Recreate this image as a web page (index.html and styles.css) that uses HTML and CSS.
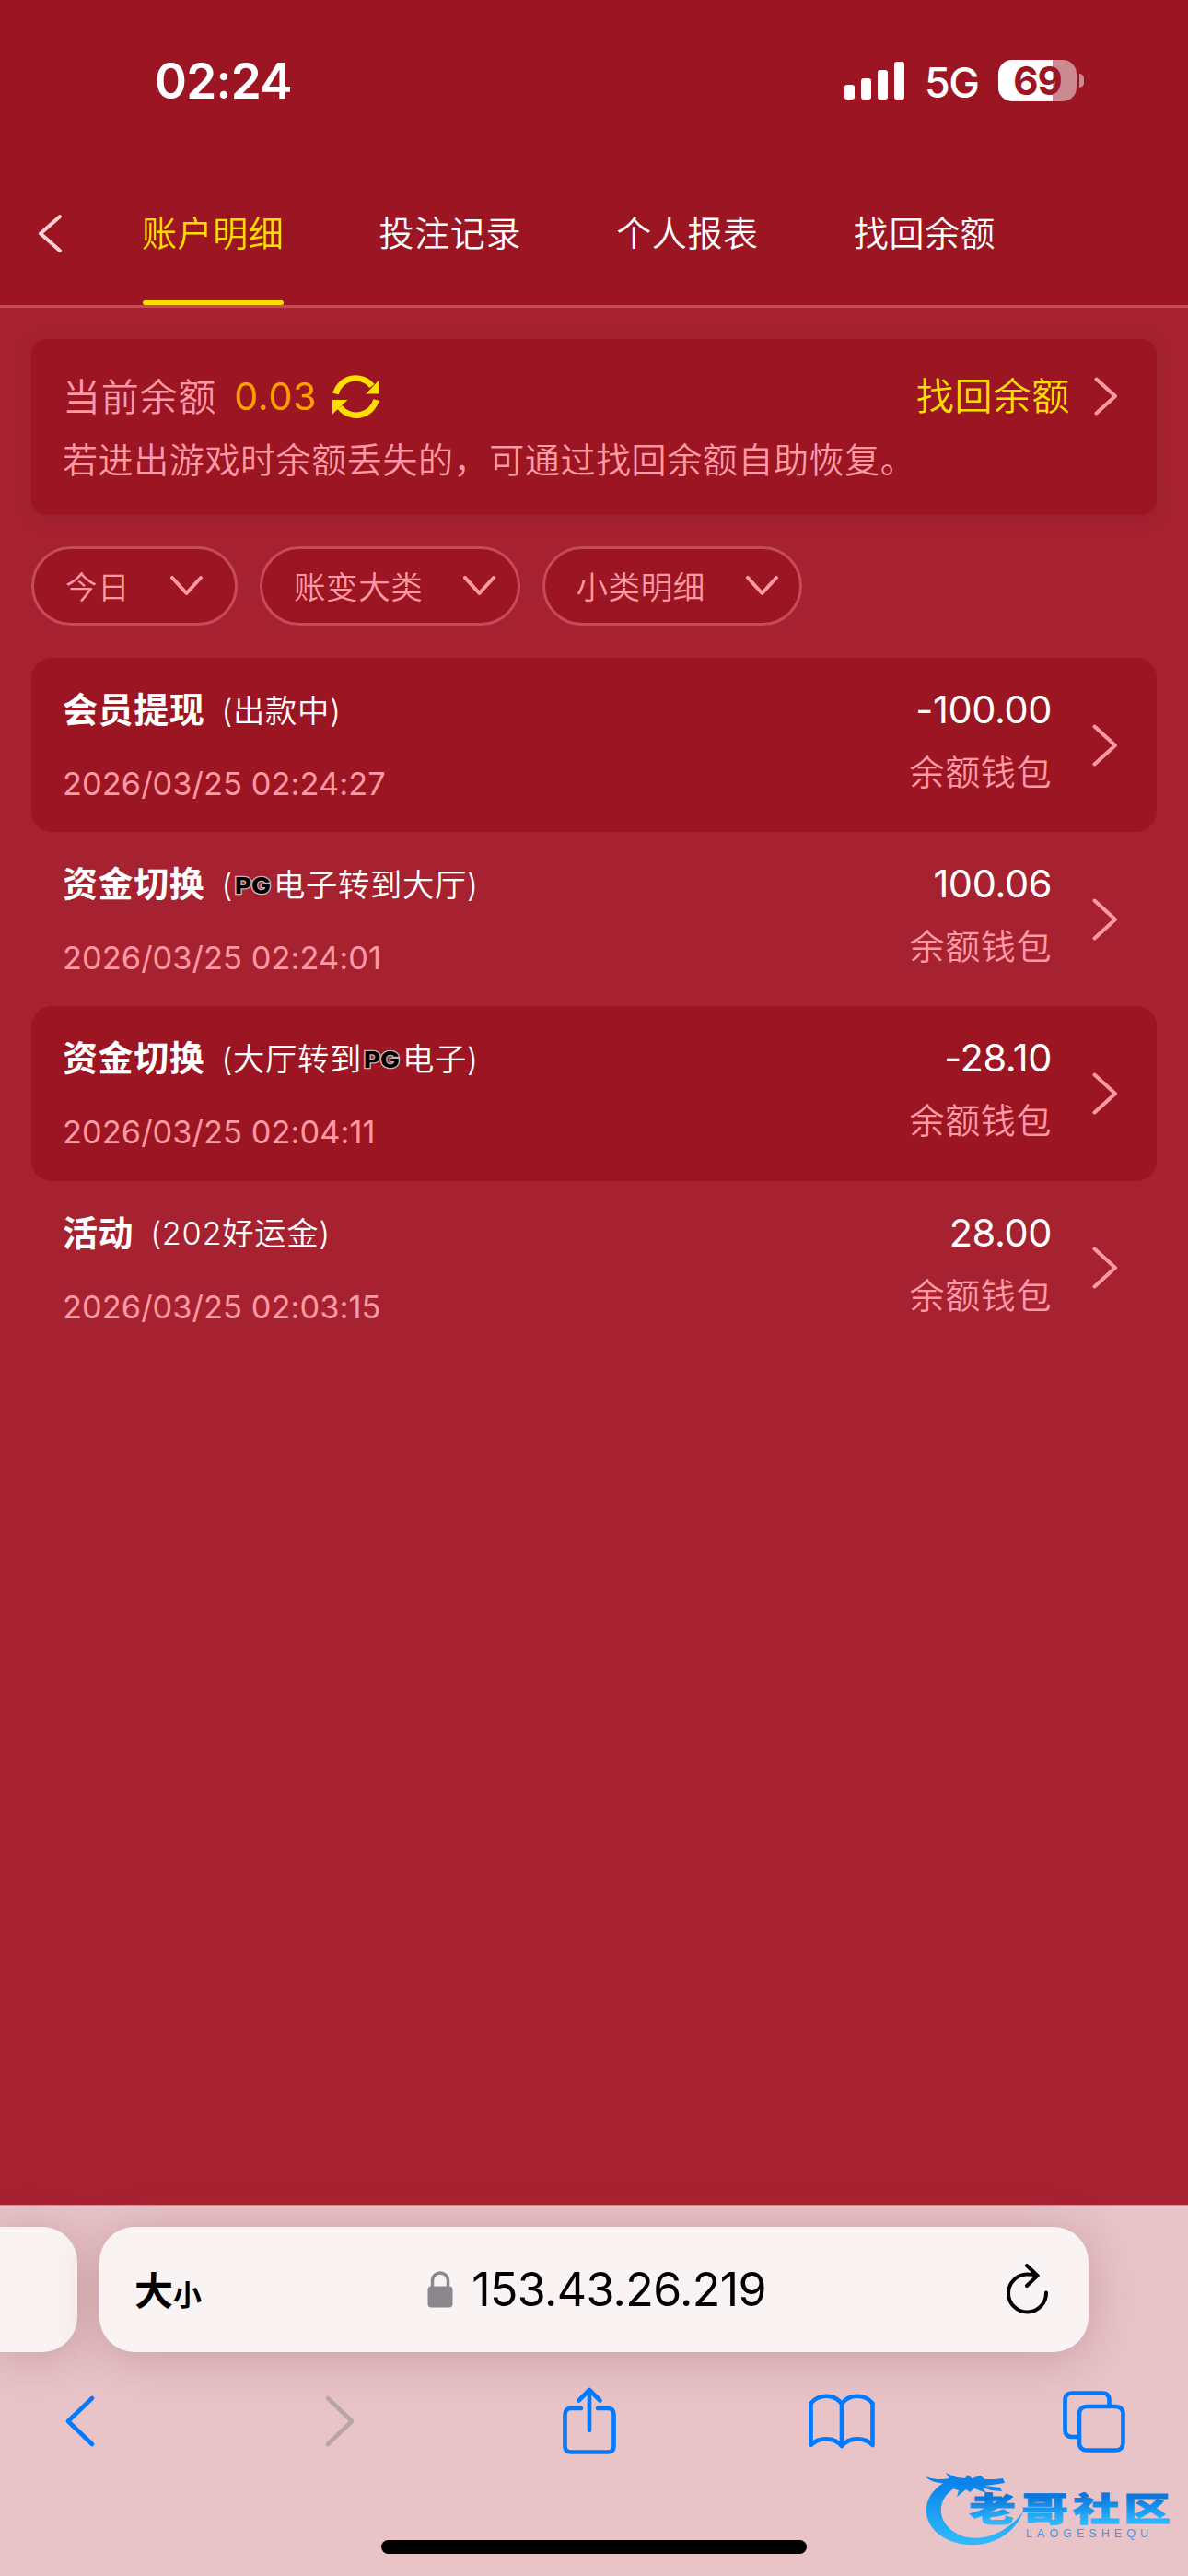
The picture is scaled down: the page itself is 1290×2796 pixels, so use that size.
FILE: index.html
```html
<!DOCTYPE html>
<html lang="zh-CN">
<head>
    <meta charset="UTF-8">
    <meta name="viewport" content="width=device-width, initial-scale=1.0">
    <title>账户明细</title>
    <link rel="stylesheet" href="styles.css">
</head>
<body>
<div class="page">

    <!-- Header -->
    <div class="header">
        <div class="status-bar">
            <div class="time">02:24</div>
            <div class="status-icons">
                <svg class="signal" width="66" height="42" viewBox="0 0 66 42" fill="#fff">
                    <rect x="0" y="25" width="11" height="16" rx="3"/>
                    <rect x="18" y="18" width="11" height="23" rx="3"/>
                    <rect x="36" y="9" width="11" height="32" rx="3"/>
                    <rect x="54" y="0" width="11" height="41" rx="3"/>
                </svg>
                <span class="network">5G</span>
                <div class="battery"><span>69</span></div>
                <div class="battery-cap"></div>
            </div>
        </div>
        <div class="nav">
            <svg class="back" width="27" height="43" viewBox="0 0 27 43" fill="none" stroke="#ffcfd3" stroke-width="4" stroke-linecap="round" stroke-linejoin="round">
                <path d="M24 3L3 21.500L24 40"/>
            </svg>
            <div class="tab active">账户明细</div>
            <div class="tab">投注记录</div>
            <div class="tab">个人报表</div>
            <div class="tab">找回余额</div>
        </div>
    </div>

    <!-- Balance -->
    <div class="balance-card">
        <div class="balance-row">
            <span class="label">当前余额</span>
            <span class="amount">0.03</span>
            <svg class="refresh" width="51" height="51" viewBox="0 0 51 51">
                <path d="M3.500 22.500A22.500 22.500 0 0 1 43 14" fill="none" stroke="#ffdf00" stroke-width="6.500"/>
                <path d="M47.500 29A22.500 22.500 0 0 1 8 37" fill="none" stroke="#ffdf00" stroke-width="6.500"/>
                <path d="M51 7V22.500H36.500Z" fill="#ffdf00"/>
                <path d="M0 44.500V29H16.500Z" fill="#ffdf00"/>
            </svg>
            <span class="recover">找回余额</span>
            <svg class="arrow" width="26" height="42" viewBox="0 0 26 42"><path d="M2.500 2.500L23 21L2.500 39.500"/></svg>
        </div>
        <div class="tip">若进出游戏时余额丢失的，可通过找回余额自助恢复。</div>
    </div>

    <!-- Filters -->
    <div class="filters">
        <div class="filter"><span>今日</span><svg width="35" height="22" viewBox="0 0 35 22"><path d="M2 2L17.500 19L33 2"/></svg></div>
        <div class="filter"><span>账变大类</span><svg width="35" height="22" viewBox="0 0 35 22"><path d="M2 2L17.500 19L33 2"/></svg></div>
        <div class="filter"><span>小类明细</span><svg width="35" height="22" viewBox="0 0 35 22"><path d="M2 2L17.500 19L33 2"/></svg></div>
    </div>

    <!-- Records -->
    <div class="list">
        <div class="record">
            <div class="info">
                <div class="title"><b>会员提现</b><span>(出款中)</span></div>
                <div class="date">2026/03/25 02:24:27</div>
            </div>
            <div class="money">
                <div class="sum">-100.00</div>
                <div class="wallet">余额钱包</div>
            </div>
            <svg class="arrow" width="28" height="46" viewBox="0 0 28 46"><path d="M2.500 2.500L25 23L2.500 43.500"/></svg>
        </div>
        <div class="record">
            <div class="info">
                <div class="title"><b>资金切换</b><span>(<svg class="pg" width="46" height="30" viewBox="0 0 46 30"><text x="3" y="24" textLength="39" lengthAdjust="spacingAndGlyphs">PG</text></svg>电子转到大厅)</span></div>
                <div class="date">2026/03/25 02:24:01</div>
            </div>
            <div class="money">
                <div class="sum">100.06</div>
                <div class="wallet">余额钱包</div>
            </div>
            <svg class="arrow" width="28" height="46" viewBox="0 0 28 46"><path d="M2.500 2.500L25 23L2.500 43.500"/></svg>
        </div>
        <div class="record">
            <div class="info">
                <div class="title"><b>资金切换</b><span>(大厅转到<svg class="pg" width="46" height="30" viewBox="0 0 46 30"><text x="3" y="24" textLength="39" lengthAdjust="spacingAndGlyphs">PG</text></svg>电子)</span></div>
                <div class="date">2026/03/25 02:04:11</div>
            </div>
            <div class="money">
                <div class="sum">-28.10</div>
                <div class="wallet">余额钱包</div>
            </div>
            <svg class="arrow" width="28" height="46" viewBox="0 0 28 46"><path d="M2.500 2.500L25 23L2.500 43.500"/></svg>
        </div>
        <div class="record">
            <div class="info">
                <div class="title"><b>活动</b><span>(202好运金)</span></div>
                <div class="date">2026/03/25 02:03:15</div>
            </div>
            <div class="money">
                <div class="sum">28.00</div>
                <div class="wallet">余额钱包</div>
            </div>
            <svg class="arrow" width="28" height="46" viewBox="0 0 28 46"><path d="M2.500 2.500L25 23L2.500 43.500"/></svg>
        </div>
    </div>

    <!-- Browser bar -->
    <div class="browser">
        <div class="address-row">
            <div class="prev-tab"></div>
            <div class="address">
                <div class="text-size">大<small>小</small></div>
                <div class="url">
                    <svg width="28" height="40" viewBox="0 0 28 40">
                        <path d="M5.500 18V11C5.500 -1 22.500 -1 22.500 11V18" fill="none" stroke="#8a888c" stroke-width="3.500"/>
                        <rect x="0.500" y="16.500" width="27" height="23" rx="4" fill="#8a888c"/>
                    </svg>
                    <span>153.43.26.219</span>
                </div>
                <svg class="reload" width="46" height="56" viewBox="0 0 46 56" fill="none" stroke="#000" stroke-width="4" stroke-linecap="round" stroke-linejoin="round">
                    <path d="M43 31.500A20.500 20.500 0 1 1 22.500 11.500C27 11.500 30 12 33.500 13"/>
                    <path d="M22 2L33.500 13L22 24"/>
                </svg>
            </div>
        </div>
        <div class="toolbar">
            <svg class="go-back" width="32" height="56" viewBox="0 0 32 56"><path d="M29 3L3 28L29 53"/></svg>
            <svg class="go-forward" width="32" height="56" viewBox="0 0 32 56"><path d="M3 3L29 28L3 53"/></svg>
            <svg width="58" height="74" viewBox="0 0 58 74">
                <path d="M20 23H9Q2.500 23 2.500 30V64Q2.500 70.500 9 70.500H49Q55.500 70.500 55.500 64V30Q55.500 23 49 23H38"/>
                <path d="M29 47V3M17.500 14.500L29 3L40.500 14.500"/>
            </svg>
            <svg width="72" height="60" viewBox="0 0 72 60">
                <path d="M36 11C28 0 11 0 2.500 10.500V56C11 47 28 47 36 57C44 47 61 47 69.500 56V10.500C61 0 44 0 36 11V57"/>
            </svg>
            <svg width="68" height="67" viewBox="0 0 68 67">
                <path d="M16 50H10Q2.500 50 2.500 42.500V10Q2.500 2.500 10 2.500H43Q50.500 2.500 50.500 10V15"/>
                <rect x="18" y="17" width="47.500" height="47.500" rx="7.500"/>
            </svg>
        </div>
        <div class="home-indicator"></div>

        <svg class="watermark" width="275" height="88" viewBox="0 0 275 88">
            <defs>
                <linearGradient id="blue" x1="0" y1="0" x2="0" y2="88" gradientUnits="userSpaceOnUse">
                    <stop offset="0.200" stop-color="#0a84ea"/>
                    <stop offset="0.900" stop-color="#2fb8fb"/>
                </linearGradient>
                <linearGradient id="word" x1="0" y1="-33" x2="0" y2="3" gradientUnits="userSpaceOnUse">
                    <stop offset="0.150" stop-color="#0878dc"/>
                    <stop offset="0.900" stop-color="#2cb6fb"/>
                </linearGradient>
            </defs>
            <g fill="url(#blue)">
                <path d="M33 13C-1 24 -5 61 25 77C56 93 97 82 110 48C92 73 60 84 38 72C13 58 16 30 42 19Z"/>
                <path d="M4 10C11 13 20 14 30 12L26 6L38 11L47 12L50 8L54 12L64 9L68 13L79 13L88 12L90 17L77 19L68 20L85 22L87 26L75 25L66 22L70 28L57 23L52 27L48 24L38 32L40 25L29 22L36 17C25 18 11 18 4 10Z"/>
            </g>
            <g class="wordmark">
                <text transform="translate(51 59) scale(1.340 0.960)">老</text>
                <text transform="translate(108 59) scale(1.340 0.960)">哥</text>
                <text transform="translate(164 59) scale(1.340 0.960)">社</text>
                <text transform="translate(219 59) scale(1.340 0.960)">区</text>
            </g>
            <text class="latin" x="113" y="76" textLength="133">LAOGESHEQU</text>
        </svg>
    </div>

</div>
</body>
</html>
```
FILE: styles.css
```css
* {
    box-sizing: border-box;
}

body {
    margin: 0;
    background-color: #a72230;
    font-family: Inter, "Noto Sans CJK SC", sans-serif;
    font-weight: 350;
    color: #fff;
}

svg {
    display: block;
    flex: none;
}

.page {
    display: flex;
    flex-direction: column;
    width: 1290px;
    height: 2796px;
    overflow: hidden;
}

/* Header */
.header {
    background-color: #9b1522;
    border-bottom: 3px solid #c64b58;
}

.status-bar {
    display: flex;
    align-items: center;
    justify-content: space-between;
    height: 175px;
    padding: 0 113px 0 168px;
}

.time {
    font-size: 53px;
    font-weight: 600;
    letter-spacing: -0.700px;
}

.status-icons {
    display: flex;
    align-items: center;
    height: 45px;
}

.network {
    width: 58px;
    margin: 3px 22px 0 21px;
    font-size: 45px;
    font-weight: 500;
    letter-spacing: -1.500px;
}

.battery {
    width: 85px;
    height: 45px;
    border-radius: 15px;
    background: linear-gradient(to right, #fff 59px, #cd8990 59px);
    color: #9b1522;
    font-size: 42px;
    font-weight: 700;
    letter-spacing: -1px;
    line-height: 45px;
    text-align: center;
}

.battery-cap {
    width: 5px;
    height: 15px;
    margin-left: 3px;
    border-radius: 0 5px 5px 0;
    background-color: #cd8990;
}

.nav {
    display: flex;
    align-items: center;
    height: 156px;
    padding-left: 41px;
}

.back {
    margin-right: 86px;
}

.tab {
    position: relative;
    width: 153px;
    margin-right: 104.600px;
    font-size: 38px;
    letter-spacing: 0.600px;
    line-height: 156px;
    white-space: nowrap;
}

.tab.active {
    color: #ffdf00;
}

.tab.active::after {
    content: "";
    position: absolute;
    left: 1px;
    bottom: 0;
    width: 153px;
    height: 5px;
    border-radius: 3px;
    background-color: #ffdf00;
}

/* Balance card */
.balance-card {
    margin: 34px 34px 0;
    height: 191px;
    padding: 32px 42px 0 34px;
    border-radius: 17px;
    background-color: #9b1522;
    box-shadow: 0 4px 18px rgba(120, 30, 40, 0.300);
    color: #ff9aa5;
}

.balance-row {
    display: flex;
    align-items: center;
    height: 60px;
    font-size: 41px;
    letter-spacing: 0.800px;
}

.label {
    margin-top: -4px;
}

.amount {
    margin: 0 17px 0 19px;
    color: #ff9f00;
    font-weight: 400;
    letter-spacing: 0.800px;
}

.recover {
    margin: -6px 26px 0 auto;
    color: #ffdf00;
}

.arrow path,
.filter path {
    fill: none;
    stroke: #ff9aa5;
    stroke-width: 4;
    stroke-linecap: round;
    stroke-linejoin: round;
}

.tip {
    margin-top: 9px;
    font-size: 38px;
    letter-spacing: 0.600px;
    line-height: 60px;
}

/* Filters */
.filters {
    display: flex;
    gap: 24px;
    margin: 34px 34px 0;
}

.filter {
    display: flex;
    align-items: center;
    width: 224px;
    height: 86px;
    padding-left: 34px;
    border: 3px solid #c64b58;
    border-radius: 43px;
    background-color: #9b1522;
    color: #ff9aa5;
    font-size: 34.500px;
    letter-spacing: 0.600px;
}

.filter + .filter {
    width: 282.500px;
}

.filter span {
    margin: -3px 44px 0 0;
}

/* Records */
.list {
    margin: 35px 34px 0;
}

.record {
    display: flex;
    align-items: center;
    height: 189.200px;
    padding: 0 42px 0 34px;
    border-radius: 22px;
}

.record:nth-child(odd) {
    background-color: #9b1522;
}

.info,
.money {
    height: 100%;
    padding-top: 31px;
    line-height: 50px;
}

.info {
    flex: 1;
}

.title {
    display: flex;
    align-items: center;
    height: 50px;
}

.title b {
    margin-right: 18px;
    font-size: 38px;
    font-weight: 700;
    letter-spacing: 0.600px;
}

.title span {
    display: flex;
    align-items: center;
    margin-top: 3px;
    font-size: 34.300px;
    letter-spacing: 0.700px;
}

.pg {
    margin: 1px -1px 0 -1px;
}

.pg text {
    font-family: Inter, sans-serif;
    font-size: 24px;
    font-weight: 800;
    letter-spacing: 0;
    fill: #000;
    stroke: #c9b4b8;
    stroke-width: 2.500px;
    paint-order: stroke;
}

.date {
    margin-top: 31px;
    color: #ff9aa5;
    font-size: 34.300px;
    font-weight: 400;
    letter-spacing: 0.100px;
}

.money {
    margin-right: 44px;
    text-align: right;
}

.sum {
    font-size: 41.500px;
    font-weight: 400;
    letter-spacing: -0.400px;
}

.wallet {
    margin-top: 18px;
    color: #ff9aa5;
    font-size: 38px;
    letter-spacing: 0.600px;
}

/* Browser bar */
.browser {
    position: relative;
    height: 403px;
    margin-top: auto;
    border-top: 1px solid #c89aa0;
    background-color: #e8c3c8;
    color: #000;
}

.address-row {
    display: flex;
    gap: 24px;
    padding-top: 23px;
}

.prev-tab,
.address {
    height: 136px;
    background-color: #f9f3f3;
    box-shadow: 0 6px 50px rgba(120, 60, 70, 0.280);
}

.prev-tab {
    width: 84px;
    border-radius: 0 38px 38px 0;
}

.address {
    display: flex;
    align-items: center;
    justify-content: space-between;
    width: 1074px;
    padding: 0 43px 0 38px;
    border-radius: 38px;
}

.text-size {
    width: 76px;
    margin-top: -3px;
    font-size: 42px;
    font-weight: 700;
    white-space: nowrap;
}

.text-size small {
    font-size: 31px;
}

.url {
    display: flex;
    align-items: center;
    gap: 20px;
    margin-right: 19px;
    font-size: 50px;
    font-weight: 400;
    letter-spacing: -0.600px;
}

.toolbar {
    display: grid;
    grid-template-columns: repeat(5, 274px);
    place-items: center;
    height: 74px;
    margin: 38px 0 0 -45.500px;
}

.toolbar svg {
    fill: none;
    stroke: #007aff;
    stroke-width: 4.600;
    stroke-linecap: round;
    stroke-linejoin: round;
}

.toolbar .go-back {
    margin-right: 10px;
}

.toolbar .go-forward {
    margin-left: 6px;
    stroke: #b8a5a8;
}

.home-indicator {
    width: 462px;
    height: 15px;
    margin: 92px auto 0;
    border-radius: 8px;
    background-color: #000;
}

.watermark {
    position: absolute;
    top: 284px;
    left: 1001px;
}

.wordmark text {
    font-family: "Noto Sans CJK SC", sans-serif;
    font-size: 38px;
    font-weight: 900;
    fill: url(#word);
    stroke: url(#word);
    stroke-width: 0.800px;
}

.latin {
    font-family: "Liberation Sans", sans-serif;
    font-size: 12.500px;
    font-weight: 400;
    fill: #3c9ae6;
}
```
